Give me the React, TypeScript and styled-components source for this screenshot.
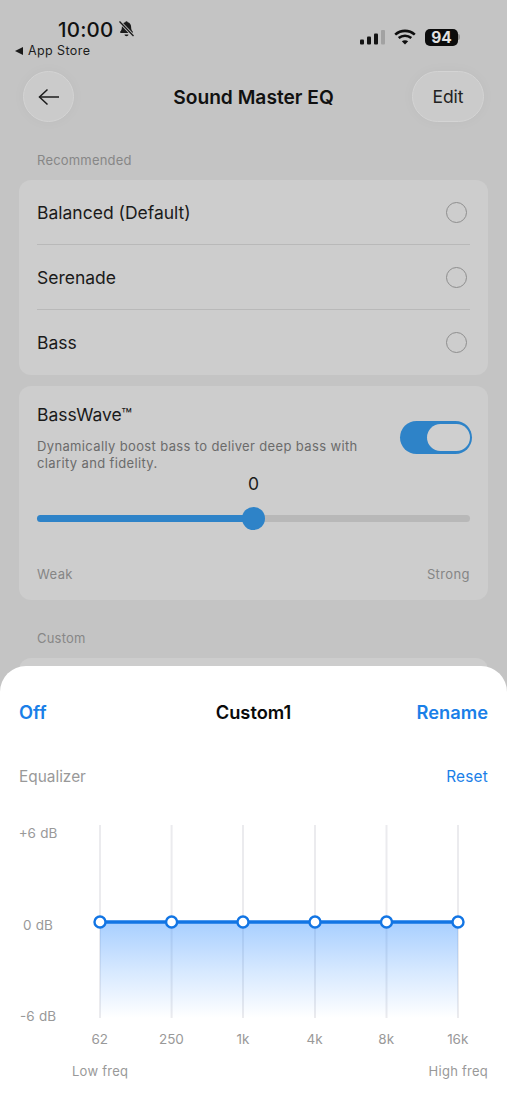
import React from "react";
import styled, { createGlobalStyle } from "styled-components";

const Global = createGlobalStyle`
  html, body { margin: 0; padding: 0; background: #c4c4c4; }
  * { box-sizing: border-box; }
  body { font-family: Inter, "Liberation Sans", sans-serif; -webkit-font-smoothing: antialiased; }
`;

const Phone = styled.div`
  position: relative;
  width: 507px;
  height: 1101px;
  overflow: hidden;
  background: #c4c4c4;
  color: #111;
`;
const StatusBar = styled.div`
  height: 71px;
  padding: 17px 47px 0 15px;
  display: flex;
  justify-content: space-between;
`;
const StatusLeft = styled.div`
  display: flex;
  flex-direction: column;
`;
const TimeRow = styled.div`
  display: flex;
  align-items: center;
  gap: 5px;
  padding-left: 43px;
  height: 24px;
`;
const Time = styled.span`
  font-size: 20.5px;
  font-weight: 500;
  color: #111;
  letter-spacing: 0.2px;
`;
const BackLink = styled.div`
  display: flex;
  align-items: center;
  gap: 5px;
  margin-top: 2px;
  font-size: 12.5px;
  line-height: 16px;
  letter-spacing: 0.4px;
  color: #1c1c1c;
`;
const StatusRight = styled.div`
  display: flex;
  align-items: center;
  gap: 9px;
  height: 40px;
`;
const Battery = styled.div`
  display: flex;
  align-items: center;
  gap: 0;
`;
const BatteryBody = styled.div`
  width: 33px;
  height: 17px;
  border-radius: 5px;
  background: #0c0c0c;
  color: #e2e2e2;
  font-size: 15.5px;
  font-weight: 700;
  line-height: 17px;
  text-align: center;
`;
const BatteryCap = styled.div`
  width: 2px;
  height: 6px;
  border-radius: 0 2px 2px 0;
  background: #8f8f8f;
`;
const NavBar = styled.div`
  padding: 0 23px;
  height: 51px;
  display: grid;
  grid-template-columns: 1fr auto 1fr;
  align-items: center;
`;
const GlassButton = styled.div<{ $w: number; $end?: boolean }>`
  width: ${(p) => p.$w}px;
  height: 51px;
  justify-self: ${(p) => (p.$end ? "end" : "start")};
  border-radius: 26px;
  background: #cbcbcb;
  border: 1px solid #d4d4d4;
  box-shadow: 0 0 14px rgba(0, 0, 0, 0.03);
  display: flex;
  align-items: center;
  justify-content: center;
  font-size: 17.5px;
  color: #222;
`;
const NavTitle = styled.div`
  font-size: 19.2px;
  font-weight: 600;
  color: #111;
`;
const Content = styled.div`
  padding: 0 19px;
`;
const SectionLabel = styled.div`
  margin-top: 30px;
  margin-bottom: 12px;
  padding-left: 18px;
  font-size: 13px;
  line-height: 16px;
  letter-spacing: 0.2px;
  color: #878787;
`;
const Card = styled.div`
  background: #cdcdcd;
  border-radius: 12px;
`;
const RadioCard = styled(Card)`
  padding: 0 18px;
  height: 195px;
  margin-bottom: 11px;
`;
const RadioRow = styled.div`
  height: 65px;
  display: flex;
  align-items: center;
  justify-content: space-between;
  font-size: 17.5px;
  color: #1a1a1a;
  &:first-child {
    height: 64px;
  }
  & + & {
    border-top: 1px solid #b9b9b9;
  }
`;
const Radio = styled.span`
  width: 21px;
  height: 21px;
  border-radius: 50%;
  border: 1px solid #8e8e8e;
  margin-right: 3px;
`;
const BassCard = styled(Card)`
  height: 214px;
  padding: 18px 18px 0;
`;
const BassHead = styled.div`
  display: flex;
  justify-content: space-between;
`;
const BassText = styled.div`
  width: 330px;
`;
const BassTitle = styled.div`
  font-size: 17.5px;
  line-height: 22px;
  color: #1a1a1a;
`;
const BassDesc = styled.div`
  margin-top: 12px;
  font-size: 13px;
  line-height: 17px;
  letter-spacing: 0.36px;
  color: #6b6b6b;
`;
const Toggle = styled.div`
  width: 72px;
  height: 33px;
  margin: 17px -2px 0 0;
  padding: 3px 2px 3px 27px;
  border-radius: 17px;
  background: #2e83c8;
`;
const ToggleThumb = styled.div`
  width: 100%;
  height: 100%;
  border-radius: 14px;
  background: #cfcfcf;
`;
const SliderValue = styled.div`
  margin-top: 1px;
  text-align: center;
  font-size: 17.5px;
  line-height: 22px;
  color: #1a1a1a;
`;
const SliderTrack = styled.div`
  position: relative;
  height: 7px;
  margin-top: 20px;
  border-radius: 4px;
  background: #b8b8b8;
`;
const SliderFill = styled.div`
  height: 100%;
  border-radius: 4px;
  background: #2e83c8;
`;
const SliderKnob = styled.div`
  position: absolute;
  top: -8px;
  width: 23px;
  height: 23px;
  margin-left: -11.5px;
  border-radius: 50%;
  background: #2e83c8;
`;
const EndLabels = styled.div`
  display: flex;
  justify-content: space-between;
  margin-top: 44px;
  font-size: 13px;
  line-height: 16px;
  letter-spacing: 0.4px;
  color: #858585;
`;
const GhostCard = styled(Card)`
  height: 60px;
`;
const Sheet = styled.div`
  position: absolute;
  left: 0;
  right: 0;
  top: 666px;
  bottom: 0;
  padding: 0 19px;
  background: #fff;
  border-radius: 26px 26px 0 0;
`;
const SheetHead = styled.div`
  height: 91px;
  display: grid;
  grid-template-columns: 1fr auto 1fr;
  align-items: center;
  font-size: 18.3px;
  font-weight: 600;
`;
const SheetAction = styled.span<{ $end?: boolean }>`
  color: #1a7fe8;
  justify-self: ${(p) => (p.$end ? "end" : "start")};
`;
const SheetTitle = styled.span`
  color: #0a0a0a;
`;
const EqHead = styled.div`
  height: 22px;
  margin-top: 8px;
  display: flex;
  align-items: center;
  justify-content: space-between;
  font-size: 15.4px;
`;
const EqLabel = styled.span`
  color: #999;
`;
const EqReset = styled.span`
  color: #1a7fe8;
  letter-spacing: 0.2px;
`;
const Chart = styled.div`
  margin-top: 38px;
  display: flex;
  height: 193px;
`;
const Axis = styled.div`
  width: 38px;
  height: 199px;
  margin-right: 15px;
  display: flex;
  flex-direction: column;
  justify-content: space-between;
  align-items: center;
  font-size: 13.5px;
  line-height: 16px;
  word-spacing: 0.5px;
  white-space: nowrap;
  color: #999;
`;
const Plot = styled.svg`
  display: block;
  flex: none;
  overflow: visible;
`;
const FreqRow = styled.div`
  margin: 13px 0 0 45px;
  display: grid;
  grid-template-columns: repeat(6, 71.6px);
  font-size: 13.5px;
  line-height: 16px;
  color: #999;
  text-align: center;
`;
const RangeRow = styled.div`
  margin-top: 16px;
  padding-left: 53px;
  display: flex;
  justify-content: space-between;
  font-size: 13px;
  line-height: 16px;
  letter-spacing: 0.25px;
  color: #999;
`;

const xs = [28, 99.6, 171, 243, 314.5, 386];
const Y = 97;

const BellOff = () => (
  <svg width="17" height="18" viewBox="0 0 17 18" fill="#1a1a1a">
    <path d="M8.5 1.2c.7 0 1.1.4 1.2 1 2.2.5 3.4 2.3 3.4 4.6 0 2.6.6 3.700 1.600 4.800.5.600.2 1.500-.7 1.500H3c-.9 0-1.200-.9-.7-1.500 1-1.100 1.600-2.200 1.600-4.800 0-2.300 1.200-4.100 3.400-4.600.1-.6.5-1 1.200-1z" />
    <path d="M6.500 14.500h4c-.2 1-1 1.700-2 1.700s-1.800-.7-2-1.700z" />
    <path d="M1.500 1.500l14 14.500" stroke="#c4c4c4" strokeWidth="3.200" />
    <path d="M1.500 1.500l14 14.500" stroke="#1a1a1a" strokeWidth="1.300" />
  </svg>
);
const Signal = () => (
  <svg width="25" height="15" viewBox="0 0 25 15">
    <rect x="0" y="9.500" width="4" height="5" rx="1" fill="#141414" />
    <rect x="7" y="6.500" width="4" height="8" rx="1" fill="#141414" />
    <rect x="14" y="3.500" width="4" height="11" rx="1" fill="#141414" />
    <rect x="21" y="0" width="4" height="14.500" rx="1" fill="#a2a2a2" />
  </svg>
);
const Wifi = () => (
  <svg width="22" height="16" viewBox="0 0 22 16" fill="none" stroke="#0e0e0e" strokeWidth="2.600">
    <path d="M1.200 5.600C6.800.6 15.200.6 20.800 5.600" />
    <path d="M4.700 9.100c3.700-3.100 8.900-3.100 12.600 0" />
    <path d="M11 15.500l-3.200-3.300c1.900-1.400 4.500-1.400 6.400 0z" fill="#0e0e0e" stroke="none" />
  </svg>
);
const BackArrow = () => (
  <svg width="22" height="18" viewBox="0 0 22 18" fill="none" stroke="#1c1c1c" strokeWidth="1.500">
    <path d="M1.500 9H21" />
    <path d="M9.500 1.500L1.500 9l8 7.500" />
  </svg>
);
const Triangle = () => (
  <svg width="8" height="8" viewBox="0 0 8 8"><path d="M0 4l8-4v8z" fill="#1a1a1a" /></svg>
);

export default function App() {
  return (
    <Phone>
      <Global />
      <StatusBar>
        <StatusLeft>
          <TimeRow>
            <Time>10:00</Time>
            <BellOff />
          </TimeRow>
          <BackLink>
            <Triangle />
            App Store
          </BackLink>
        </StatusLeft>
        <StatusRight>
          <Signal />
          <Wifi />
          <Battery>
            <BatteryBody>94</BatteryBody>
            <BatteryCap />
          </Battery>
        </StatusRight>
      </StatusBar>
      <NavBar>
        <GlassButton $w={51}><BackArrow /></GlassButton>
        <NavTitle>Sound Master EQ</NavTitle>
        <GlassButton $w={72} $end>Edit</GlassButton>
      </NavBar>
      <Content>
        <SectionLabel>Recommended</SectionLabel>
        <RadioCard>
          {["Balanced (Default)", "Serenade", "Bass"].map((t) => (
            <RadioRow key={t}>
              {t}
              <Radio />
            </RadioRow>
          ))}
        </RadioCard>
        <BassCard>
          <BassHead>
            <BassText>
              <BassTitle>BassWave™</BassTitle>
              <BassDesc>Dynamically boost bass to deliver deep bass with clarity and fidelity.</BassDesc>
            </BassText>
            <Toggle><ToggleThumb /></Toggle>
          </BassHead>
          <SliderValue>0</SliderValue>
          <SliderTrack>
            <SliderFill style={{ width: "50%" }} />
            <SliderKnob style={{ left: "50%" }} />
          </SliderTrack>
          <EndLabels>
            <span>Weak</span>
            <span>Strong</span>
          </EndLabels>
        </BassCard>
        <SectionLabel>Custom</SectionLabel>
        <GhostCard />
      </Content>
      <Sheet>
        <SheetHead>
          <SheetAction>Off</SheetAction>
          <SheetTitle>Custom1</SheetTitle>
          <SheetAction $end>Rename</SheetAction>
        </SheetHead>
        <EqHead>
          <EqLabel>Equalizer</EqLabel>
          <EqReset>Reset</EqReset>
        </EqHead>
        <Chart>
          <Axis>
            <span>+6 dB</span>
            <span>0 dB</span>
            <span>-6 dB</span>
          </Axis>
          <Plot width="416" height="193" viewBox="0 0 416 193">
            <defs>
              <linearGradient id="eqFill" x1="0" y1="0" x2="0" y2="1">
                <stop offset="0" stopColor="#2f8cff" stopOpacity="0.42" />
                <stop offset="0.5" stopColor="#2f8cff" stopOpacity="0.2" />
                <stop offset="1" stopColor="#2f8cff" stopOpacity="0" />
              </linearGradient>
            </defs>
            {xs.map((x) => (
              <line key={x} x1={x} x2={x} y1="0" y2="193" stroke="#ebebee" strokeWidth="2" />
            ))}
            <rect x={xs[0]} y={Y} width={xs[5] - xs[0]} height={193 - Y} fill="url(#eqFill)" />
            <line x1={xs[0]} x2={xs[5]} y1={Y} y2={Y} stroke="#1275e4" strokeWidth="3.500" />
            {xs.map((x) => (
              <circle key={x} cx={x} cy={Y} r="5.500" fill="#fff" stroke="#1275e4" strokeWidth="2.400" />
            ))}
          </Plot>
        </Chart>
        <FreqRow>
          {["62", "250", "1k", "4k", "8k", "16k"].map((f) => (
            <span key={f}>{f}</span>
          ))}
        </FreqRow>
        <RangeRow>
          <span>Low freq</span>
          <span>High freq</span>
        </RangeRow>
      </Sheet>
    </Phone>
  );
}
